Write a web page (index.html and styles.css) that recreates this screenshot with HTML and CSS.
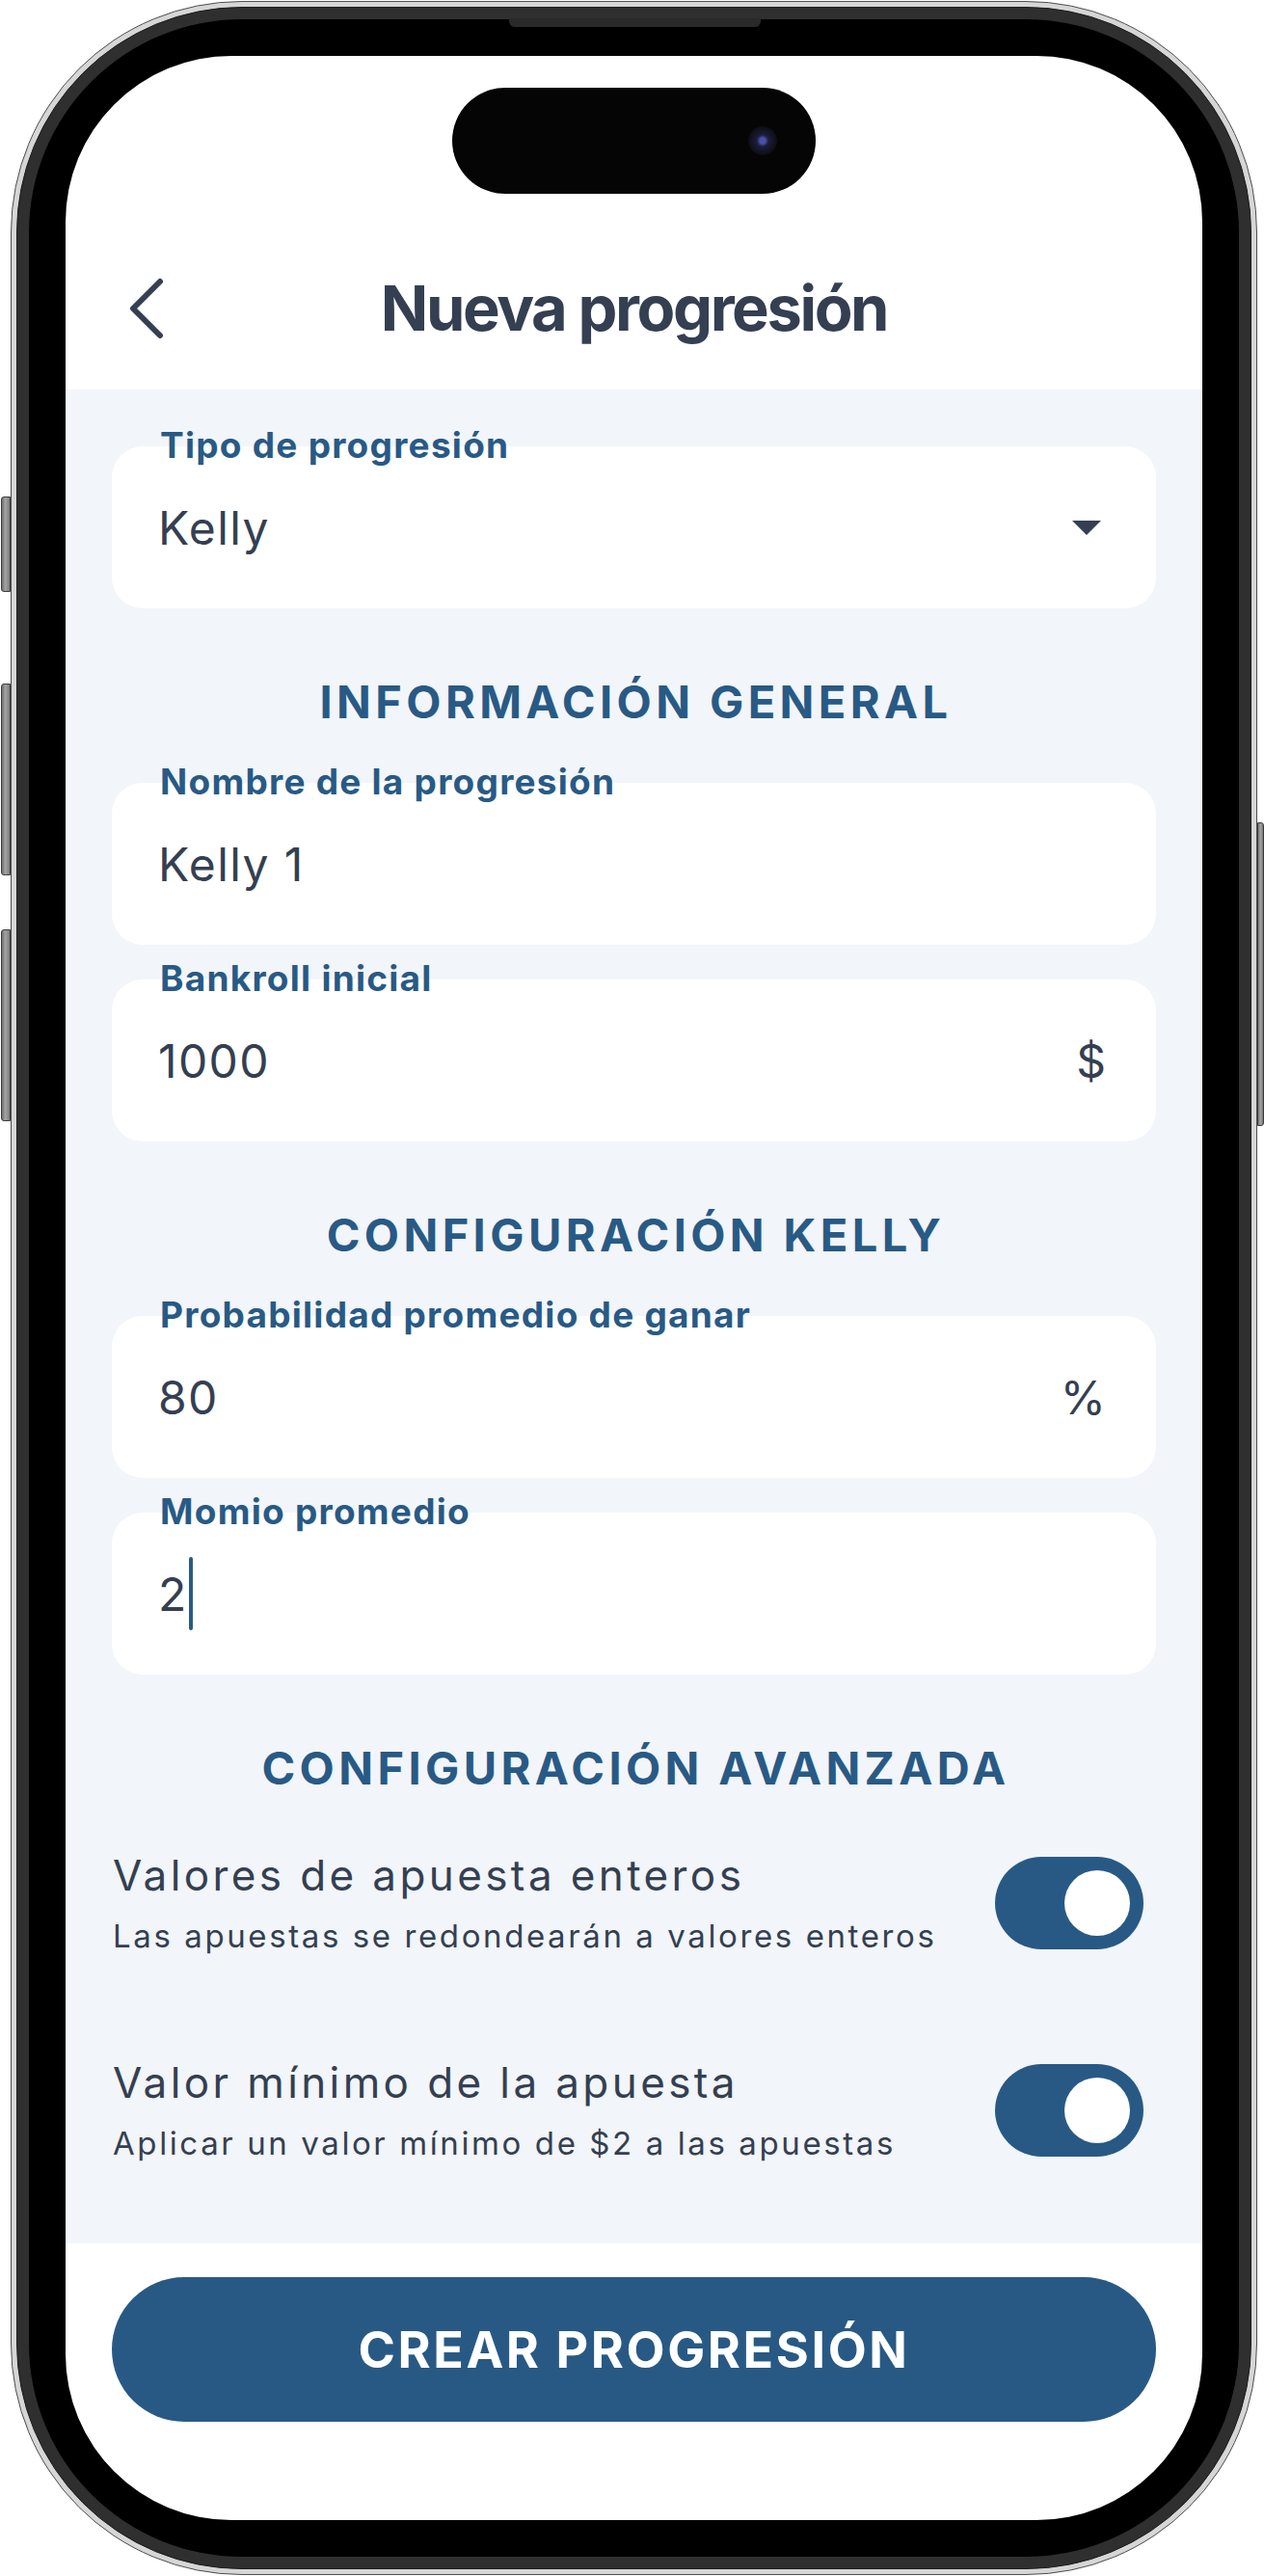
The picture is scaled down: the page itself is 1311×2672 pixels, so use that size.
FILE: index.html
```html
<!DOCTYPE html>
<html lang="es">
<head>
    <meta charset="utf-8">
    <title>Nueva progresión</title>
    <link rel="stylesheet" href="styles.css">
</head>
<body>
<div class="device">
    <div class="side side-left">
        <span class="key key-action"></span>
        <span class="key key-vol-up"></span>
        <span class="key key-vol-down"></span>
    </div>
    <div class="phone">
        <div class="frame">
            <div class="bezel">
                <span class="speaker"></span>
                <div class="screen">
                    <div class="status">
                        <div class="island"><span class="lens"></span></div>
                    </div>
                    <header class="nav">
                        <a class="back" href="#">
                            <svg width="40" height="64" viewBox="0 0 40 64"><path d="M34 4 L6 32 L34 60" fill="none" stroke="#343f52" stroke-width="6" stroke-linecap="round" stroke-linejoin="round"/></svg>
                        </a>
                        <h1 class="title">Nueva progresión</h1>
                        <span></span>
                    </header>
                    <main class="content">
                        <div class="field">
                            <label class="field-label">Tipo de progresión</label>
                            <span class="field-value">Kelly</span>
                            <svg class="caret" width="30" height="15" viewBox="0 0 30 15"><polygon points="0,0 30,0 15,15" fill="#343f52"/></svg>
                        </div>

                        <h2 class="section">INFORMACIÓN GENERAL</h2>
                        <div class="field">
                            <label class="field-label">Nombre de la progresión</label>
                            <span class="field-value">Kelly 1</span>
                        </div>
                        <div class="field">
                            <label class="field-label">Bankroll inicial</label>
                            <span class="field-value">1000</span>
                            <span class="suffix">$</span>
                        </div>

                        <h2 class="section">CONFIGURACIÓN KELLY</h2>
                        <div class="field">
                            <label class="field-label">Probabilidad promedio de ganar</label>
                            <span class="field-value">80</span>
                            <span class="suffix">%</span>
                        </div>
                        <div class="field">
                            <label class="field-label">Momio promedio</label>
                            <span class="field-value">2<span class="cursor"></span></span>
                        </div>

                        <h2 class="section section-last">CONFIGURACIÓN AVANZADA</h2>
                        <div class="settings">
                            <div class="setting">
                                <div>
                                    <div class="setting-title">Valores de apuesta enteros</div>
                                    <div class="setting-desc">Las apuestas se redondearán a valores enteros</div>
                                </div>
                                <span class="switch"><span class="switch-thumb"></span></span>
                            </div>
                            <div class="setting">
                                <div>
                                    <div class="setting-title">Valor mínimo de la apuesta</div>
                                    <div class="setting-desc">Aplicar un valor mínimo de $2 a las apuestas</div>
                                </div>
                                <span class="switch"><span class="switch-thumb"></span></span>
                            </div>
                        </div>
                    </main>
                    <footer class="footer">
                        <button class="primary">CREAR PROGRESIÓN</button>
                    </footer>
                </div>
            </div>
        </div>
    </div>
    <div class="side side-right">
        <span class="key key-power"></span>
    </div>
</div>
</body>
</html>
```

FILE: styles.css
```css
body {
  margin: 0;
  background-color: #fff;
  font-family: Inter, "Noto Sans", sans-serif;
}

/* device shell */
.device {
  display: flex;
  align-items: flex-start;
  width: 1311px;
  height: 2672px;
}
.side-left {
  width: 11px;
  display: flex;
  flex-direction: column;
  align-items: flex-end;
}
.side-right {
  width: 7px;
  display: flex;
  flex-direction: column;
}
.key {
  display: block;
  width: 10px;
  box-sizing: border-box;
  border: 1px solid #3c3c3c;
  border-radius: 3px 0 0 3px;
  background: linear-gradient(to right, #6e6e6e, #a4a4a4 45%, #7c7c7c);
}
.key-action { margin-top: 515px; height: 99px; }
.key-vol-up { margin-top: 95px; height: 199px; }
.key-vol-down { margin-top: 56px; height: 199px; }
.key-power {
  margin-top: 853px;
  height: 315px;
  width: 7px;
  border-radius: 0 3px 3px 0;
  background: linear-gradient(to left, #6e6e6e, #a4a4a4 45%, #7c7c7c);
}
.phone {
  margin-top: 1px;
  width: 1293px;
  height: 2670px;
  box-sizing: border-box;
  padding: 5px;
  border: 1px solid #4d4d4d;
  border-radius: 240px;
  background: #d6d6d6;
}
.frame {
  height: 100%;
  box-sizing: border-box;
  padding: 12px;
  border: 1px solid #1c1c1c;
  border-radius: 234px;
  background: #2f2f2f;
}
.bezel {
  position: relative;
  height: 100%;
  box-sizing: border-box;
  padding: 38px;
  border-radius: 221px;
  background: #000;
}
.speaker {
  position: absolute;
  top: -1px;
  left: 50%;
  width: 261px;
  height: 9px;
  margin-left: -130px;
  border-radius: 0 0 6px 6px;
  background: #2a2a2a;
}
.screen {
  height: 100%;
  display: flex;
  flex-direction: column;
  overflow: hidden;
  border-radius: 172px;
  background: #fff;
}

/* status + nav */
.status {
  height: 178px;
  flex: none;
  box-sizing: border-box;
  padding-top: 33px;
  display: flex;
  justify-content: center;
}
.island {
  width: 377px;
  height: 110px;
  box-sizing: border-box;
  padding-right: 40px;
  display: flex;
  align-items: center;
  justify-content: flex-end;
  border-radius: 55px;
  background: #050505;
}
.lens {
  width: 30px;
  height: 30px;
  border-radius: 50%;
  background: radial-gradient(circle, #4a4fa8 0 3px, #1c1e3c 6px, #0d0d12 15px);
}
.nav {
  height: 168px;
  flex: none;
  display: grid;
  grid-template-columns: 1fr auto 1fr;
  align-items: center;
}
.back {
  display: flex;
  padding-left: 64px;
}
.title {
  margin: 0;
  font-size: 65px;
  line-height: 80px;
  font-weight: 700;
  letter-spacing: -2.4px;
  color: #343f52;
}

/* form */
.content {
  flex: 1;
  display: flex;
  flex-direction: column;
  padding: 59px 48px 0;
  background: #f2f5f9;
}
.field {
  position: relative;
  height: 168px;
  flex: none;
  box-sizing: border-box;
  padding: 0 52px 0 48px;
  display: flex;
  align-items: center;
  border-radius: 32px;
  background: #fff;
}
.field + .field {
  margin-top: 36px;
}
.field-label {
  position: absolute;
  left: 50px;
  top: -23px;
  font-size: 37px;
  line-height: 44px;
  font-weight: 700;
  letter-spacing: 1.25px;
  color: #285a85;
}
.field-value {
  flex: 1;
  display: flex;
  align-items: center;
  font-size: 48px;
  letter-spacing: 1.4px;
  color: #343f52;
}
.suffix {
  font-size: 48px;
  color: #343f52;
}
.caret {
  margin-right: 5px;
}
.cursor {
  width: 4px;
  height: 76px;
  margin-left: 1px;
  border-radius: 2px;
  background: #285a85;
}
.section {
  margin: 67px 0 54px;
  padding-left: 4px;
  font-size: 47px;
  line-height: 60px;
  font-weight: 700;
  letter-spacing: 4.4px;
  text-align: center;
  color: #285a85;
}
.section-last {
  margin-bottom: 55px;
}
.settings {
  display: flex;
  flex-direction: column;
  gap: 106px;
}
.setting {
  display: flex;
  align-items: center;
  justify-content: space-between;
  padding: 0 13px 0 1px;
}
.setting-title {
  font-size: 44px;
  line-height: 52px;
  letter-spacing: 3.4px;
  color: #343f52;
}
.setting-desc {
  margin-top: 17px;
  font-size: 33px;
  line-height: 40px;
  letter-spacing: 2.6px;
  color: #343f52;
}
.switch {
  width: 154px;
  height: 96px;
  flex: none;
  box-sizing: border-box;
  padding: 0 14px;
  display: flex;
  align-items: center;
  justify-content: flex-end;
  border-radius: 48px;
  background: #285985;
}
.switch-thumb {
  width: 68px;
  height: 68px;
  border-radius: 50%;
  background: #fff;
}

/* footer */
.footer {
  height: 287px;
  flex: none;
  box-sizing: border-box;
  padding: 35px 48px 0;
}
.primary {
  width: 100%;
  height: 150px;
  border: 0;
  border-radius: 75px;
  background: #285985;
  color: #fff;
  font-family: Inter, "Noto Sans", sans-serif;
  font-size: 52px;
  font-weight: 700;
  letter-spacing: 2.6px;
}
```
